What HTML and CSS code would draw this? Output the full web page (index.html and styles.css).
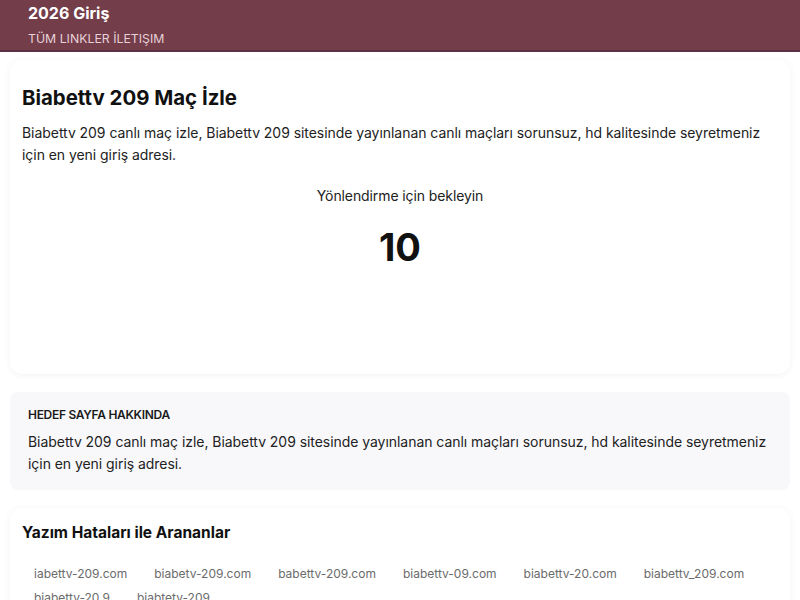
FILE: index.html
```html
<!DOCTYPE html>
<html lang="tr">
<head>
<meta charset="utf-8">
<title>Biabettv 209 Maç İzle</title>
<link rel="stylesheet" href="styles.css">
</head>
<body>
<header class="topbar">
  <div class="brand">2026 Giriş</div>
  <nav class="nav"><a href="#">TÜM LINKLER</a> <a href="#">İLETIŞIM</a></nav>
</header>
<main class="wrap">
  <section class="card main-card">
    <h1 class="title">Biabettv 209 Maç İzle</h1>
    <p class="desc">Biabettv 209 canlı maç izle, Biabettv 209 sitesinde yayınlanan canlı maçları sorunsuz, hd kalitesinde seyretmeniz için en yeni giriş adresi.</p>
    <div class="redirect">
      <div class="wait">Yönlendirme için bekleyin</div>
      <div class="count">10</div>
    </div>
  </section>
  <section class="about">
    <div class="about-label">HEDEF SAYFA HAKKINDA</div>
    <p class="desc">Biabettv 209 canlı maç izle, Biabettv 209 sitesinde yayınlanan canlı maçları sorunsuz, hd kalitesinde seyretmeniz için en yeni giriş adresi.</p>
  </section>
  <section class="card typos">
    <h2 class="subtitle">Yazım Hataları ile Arananlar</h2>
    <div class="links">
      <a href="#">iabettv-209.com</a>
      <a href="#">biabetv-209.com</a>
      <a href="#">babettv-209.com</a>
      <a href="#">biabettv-09.com</a>
      <a href="#">biabettv-20.com</a>
      <a href="#">biabettv_209.com</a>
      <a href="#">biabettv-20.9</a>
      <a href="#">biabtetv-209</a>
    </div>
  </section>
</main>
</body>
</html>
```
FILE: styles.css
```css
* { box-sizing: border-box; }
html, body { margin: 0; padding: 0; background: #ffffff; }
body {
  font-family: "Inter", "Noto Sans", sans-serif;
  color: #1a1a1a;
}
.topbar {
  background: #733d4a;
  border-bottom: 2px solid #5a3047;
  height: 52px;
  padding: 3px 28px 0;
}
.brand {
  color: #ffffff;
  font-weight: 700;
  font-size: 16px;
  line-height: 20px;
}
.nav {
  margin-top: 9px;
  font-size: 12.3px;
  line-height: 14px;
}
.nav a { color: #e6d2d8; text-decoration: none; }
.wrap {
  padding: 8px 10px 0;
  display: flex;
  flex-direction: column;
  gap: 18px;
}
.card {
  background: #ffffff;
  border-radius: 12px;
  box-shadow: 0 1px 6px rgba(0, 0, 0, 0.06);
  padding: 24px 12px;
}
.main-card { height: 314px; }
.title {
  margin: 0 0 10px;
  font-size: 20.4px;
  line-height: 28px;
  font-weight: 700;
  color: #111111;
}
.desc {
  margin: 0;
  font-size: 14px;
  line-height: 22px;
  letter-spacing: -0.05px;
  color: #222222;
}
.redirect {
  margin-top: 20px;
  text-align: center;
}
.wait {
  font-size: 14px;
  line-height: 20px;
  letter-spacing: -0.1px;
  color: #222222;
}
.count {
  margin-top: 19px;
  font-size: 38px;
  line-height: 44px;
  font-weight: 700;
  color: #111111;
}
.about {
  background: #f8f8fb;
  border-radius: 8px;
  padding: 16px 18px 15px;
}
.about-label {
  font-size: 12px;
  line-height: 14px;
  font-weight: 600;
  color: #1a1a1a;
  margin-bottom: 9px;
  letter-spacing: -0.3px;
}
.typos { padding: 14px 12px 10px; }
.subtitle {
  margin: 0 0 20px;
  font-size: 15.5px;
  line-height: 22px;
  font-weight: 700;
  color: #111111;
}
.links {
  display: flex;
  flex-wrap: wrap;
  column-gap: 3px;
  row-gap: 4px;
}
.links a {
  padding: 0 12px;
  font-size: 12px;
  line-height: 20px;
  color: #6b6b6b;
  text-decoration: none;
}
```
